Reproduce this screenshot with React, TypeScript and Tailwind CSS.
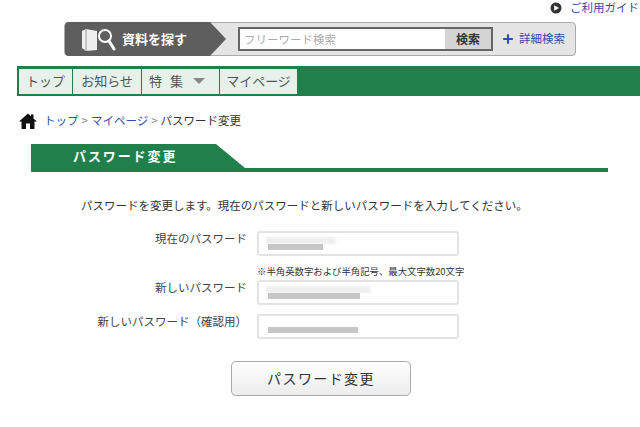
import React from 'react';
import { Plus } from 'lucide-react';

const jp = { fontFamily: '"Noto Sans CJK JP", "Liberation Sans", sans-serif' };

const navItems = ['トップ', 'お知らせ'];

const Field: React.FC<{ label: string; barWidth: number; haze: number; className?: string }> = ({ label, barWidth, haze, className = '' }) => (
  <div className={`flex items-start ${className}`}>
    <label className="w-[247px] text-right text-[11.5px] leading-[14px] text-[#444]">{label}</label>
    <div className="ml-[10px] h-[25px] w-[202px] rounded-[3px] border-2 border-[#e3e3e3] bg-white pl-[7px] pt-[4px]">
      {haze > 0 ? <div className="h-[7px] bg-[#efefef] blur-[1px]" style={{ width: haze }} /> : <div className="h-[7px]" />}
      <div className="ml-[2px] h-[6px] bg-[#c6c6c6] blur-[0.7px]" style={{ width: barWidth }} />
    </div>
  </div>
);

export default function App() {
  return (
    <div className="h-[427px] w-[640px] overflow-hidden bg-white" style={jp}>
      <div className="flex h-[22px] items-start justify-end pr-[1px]">
        <svg width="12" height="12" viewBox="0 0 12 12" className="mr-[8px] mt-[2px]">
          <circle cx="6" cy="6" r="5.5" fill="#333" />
          <path d="M4.2 3.2 L9 6 L4.2 8.8 Z" fill="#fff" />
        </svg>
        <a className="text-[11.5px] leading-[14px] text-[#2f4fa8]">ご利用ガイド</a>
      </div>

      {/* search bar */}
      <div className="ml-[64px] flex h-[34px] w-[512px] items-center rounded-[4px] border border-[#aaaaaa] bg-[#e4e4e4]">
        <div className="flex h-[34px] w-[161px] shrink-0 items-center rounded-l-[4px] bg-[#5e5e5e] pl-[16px] [clip-path:polygon(0_0,145px_0,161px_50%,145px_100%,0_100%)]">
          <svg width="36" height="26" viewBox="0 0 36 26">
            <path d="M1 5 L5 3 L16 5 L16 24 L5 25 L1 22 Z" fill="#eeeeee" />
            <path d="M5 3 L5 25" stroke="#9a9a9a" strokeWidth="1" />
            <circle cx="24" cy="10" r="6" fill="#5e5e5e" stroke="#fff" strokeWidth="2" />
            <path d="M28 15 L33 23" stroke="#fff" strokeWidth="3" strokeLinecap="round" />
          </svg>
          <span className="ml-[5px] text-[13px] font-bold text-white">資料を探す</span>
        </div>
        <div className="ml-[12px] flex h-[24px] w-[255px] shrink-0 items-stretch border-2 border-[#666] bg-white">
          <span className="flex-1 pl-[4px] text-[11.5px] leading-[20px] text-[#aaaaaa]">フリーワード検索</span>
          <span className="w-[46px] bg-[#d4d4d4] text-center text-[12px] font-bold leading-[20px] text-[#333]">検索</span>
        </div>
        <Plus size={14} strokeWidth={3.5} className="ml-[8px] shrink-0 text-[#2f4fa8]" />
        <a className="ml-[4px] whitespace-nowrap text-[11.5px] text-[#2f4fa8]">詳細検索</a>
      </div>

      {/* nav */}
      <nav className="ml-[17px] mt-[10px] flex h-[30px] items-center gap-[1px] bg-[#20804b] px-[2px]">
        {navItems.map((item, i) => (
          <a key={item} className={`flex h-[25px] items-center justify-center bg-[#e6f1ea] text-[13px] text-[#555] ${i === 0 ? 'w-[53px]' : 'w-[68px]'}`}>
            {item}
          </a>
        ))}
        <a className="flex h-[25px] w-[77px] items-center bg-[#e6f1ea] pl-[7px] text-[13px] text-[#555]">
          特<span className="ml-[8px]">集</span>
          <svg width="12" height="6" viewBox="0 0 12 6" className="ml-[10px]">
            <path d="M0 0 H12 L6 6 Z" fill="#888" />
          </svg>
        </a>
        <a className="flex h-[25px] w-[77px] items-center justify-center bg-[#e6f1ea] text-[13px] text-[#555]">マイページ</a>
      </nav>

      {/* breadcrumb */}
      <div className="ml-[19px] mt-[16px] flex h-[18px] items-center text-[11.5px] text-[#333]">
        <svg width="18" height="16" viewBox="0 0 18 16">
          <path d="M9 0.5 L12 3.2 V1.5 H14.5 V5.4 L18 8.6 H15.5 V16 H11 V10.5 H7 V16 H2.5 V8.6 H0 Z" fill="#111" />
        </svg>
        <a className="ml-[7px] text-[#2f4fa8]">トップ</a>
        <span className="mx-[3px] text-[#888]">&gt;</span>
        <a className="text-[#2f4fa8]">マイページ</a>
        <span className="mx-[3px] text-[#888]">&gt;</span>
        <span>パスワード変更</span>
      </div>

      {/* heading */}
      <div className="ml-[31px] mt-[14px] h-[28px] w-[577px] border-b-4 border-[#20804b]">
        <h1 className="h-[24px] w-[214px] bg-[#20804b] pl-[42px] text-[13px] font-bold leading-[24px] tracking-[1.9px] text-white [clip-path:polygon(0_0,185px_0,214px_100%,0_100%)]">
          パスワード変更
        </h1>
      </div>

      <p className="ml-[81px] mt-[24px] text-[11.5px] leading-[18px] text-[#333]">
        パスワードを変更します。現在のパスワードと新しいパスワードを入力してください。
      </p>

      <form className="mt-[17px]">
        <Field label="現在のパスワード" barWidth={55} haze={70} />
        <p className="ml-[257px] mt-[8px] text-[9.4px] leading-[14px] text-[#333]">※半角英数字および半角記号、最大文字数20文字</p>
        <Field label="新しいパスワード" barWidth={92} haze={105} className="mt-[2px]" />
        <Field label="新しいパスワード（確認用）" barWidth={90} haze={0} className="mt-[9px]" />
        <button
          type="button"
          className="ml-[231px] mt-[22px] block h-[35px] w-[180px] rounded-[5px] border border-[#aaaaaa] bg-gradient-to-b from-white to-[#ececec] text-[14px] tracking-[1.4px] text-[#333]"
        >
          パスワード変更
        </button>
      </form>
    </div>
  );
}
